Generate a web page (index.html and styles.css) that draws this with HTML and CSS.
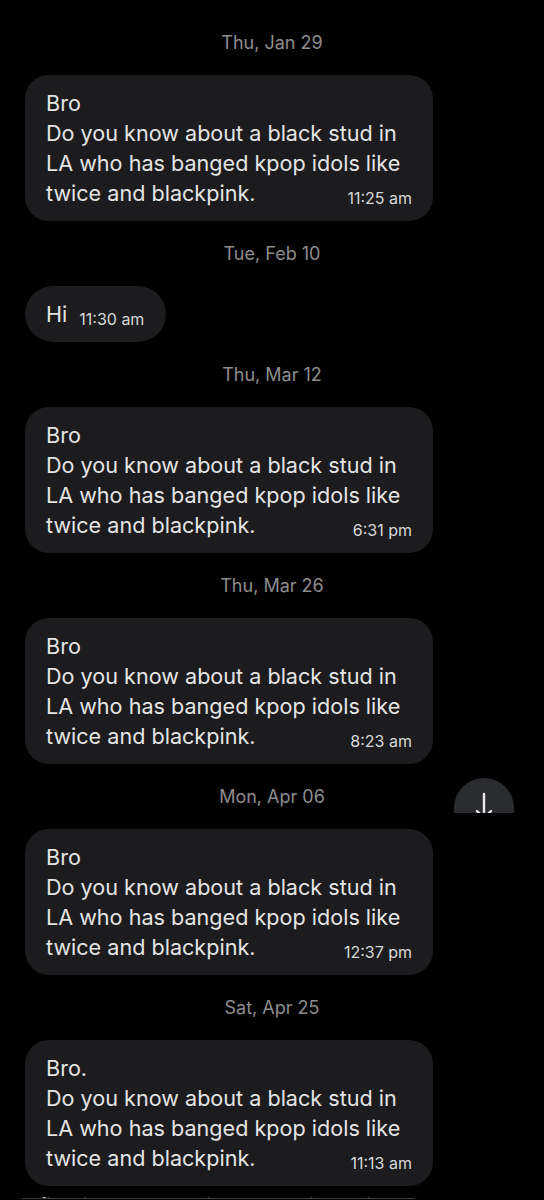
FILE: index.html
```html
<html>
<head>
    <link rel="stylesheet" href="styles.css">
</head>
<body>
    <div class="chat">
        <div class="day">Thu, Jan 29</div>
        <div class="msg">
            <span class="text">Bro<br>Do you know about a black stud in LA who has banged kpop idols like twice and blackpink.</span><span class="time">11:25 am</span>
        </div>

        <div class="day">Tue, Feb 10</div>
        <div class="msg short">
            <span class="text">Hi</span><span class="time">11:30 am</span>
        </div>

        <div class="day">Thu, Mar 12</div>
        <div class="msg">
            <span class="text">Bro<br>Do you know about a black stud in LA who has banged kpop idols like twice and blackpink.</span><span class="time">6:31 pm</span>
        </div>

        <div class="day">Thu, Mar 26</div>
        <div class="msg">
            <span class="text">Bro<br>Do you know about a black stud in LA who has banged kpop idols like twice and blackpink.</span><span class="time">8:23 am</span>
        </div>

        <div class="day">Mon, Apr 06</div>
        <div class="msg">
            <span class="text">Bro<br>Do you know about a black stud in LA who has banged kpop idols like twice and blackpink.</span><span class="time">12:37 pm</span>
        </div>

        <div class="day">Sat, Apr 25</div>
        <div class="msg">
            <span class="text">Bro.<br>Do you know about a black stud in LA who has banged kpop idols like twice and blackpink.</span><span class="time">11:13 am</span>
        </div>

        <div class="cut">
            <div class="cut-text">I find it hard to believe kpop idols like that</div>
        </div>
    </div>

    <!-- floating scroll-to-bottom button, half hidden behind the fold -->
    <div class="scroll-btn">
        <div class="scroll-circle">
            <svg width="60" height="60" viewBox="0 0 60 60">
                <path d="M30 16 V40 M23 33 L30 40 L37 33" stroke="#e8e8e8" stroke-width="2.4" fill="none" stroke-linecap="round" stroke-linejoin="round"/>
            </svg>
        </div>
    </div>
</body>
</html>
```

FILE: styles.css
```css
body {
    margin: 0;
    padding: 0;
    background-color: #000;
    font-family: Inter, Roboto, "Noto Sans", Arial, sans-serif;
    color: #e4e4e4;
    height: 1200px;
    overflow: hidden;
    position: relative;
}
.chat {
    padding: 10px 0 0 25px;
    display: flex;
    flex-direction: column;
    align-items: flex-start;
}
.day {
    align-self: stretch;
    margin-left: -25px;
    height: 65px;
    display: flex;
    align-items: center;
    justify-content: center;
    font-size: 18px;
    color: #8c8c8c;
}
.msg {
    display: flow-root;
    box-sizing: border-box;
    max-width: 408px;
    padding: 13px 21px 13px 21px;
    background-color: #1c1c1e;
    border-radius: 24px;
    font-size: 21.6px;
    line-height: 30px;
}
.msg.short {
    border-radius: 28px;
    padding-right: 22px;
}
.time {
    float: right;
    margin-left: 12px;
    position: relative;
    top: 5px;
    font-size: 16px;
    line-height: 30px;
    color: #d8d8d8;
}
.cut {
    margin: 6px 0 0 -3px;
    width: 393px;
    height: 6px;
    overflow: hidden;
    border-bottom: 1px solid #3a3a3a;
}
.cut-text {
    font-size: 21px;
    line-height: 30px;
    padding-left: 5px;
    color: #e4e4e4;
}
.scroll-btn {
    position: absolute;
    left: 454px;
    top: 778px;
    width: 60px;
    height: 35px;
    overflow: hidden;
}
.scroll-circle {
    width: 60px;
    height: 60px;
    border-radius: 50%;
    background-color: #2b2c30;
}
.scroll-circle svg {
    display: block;
}
```
